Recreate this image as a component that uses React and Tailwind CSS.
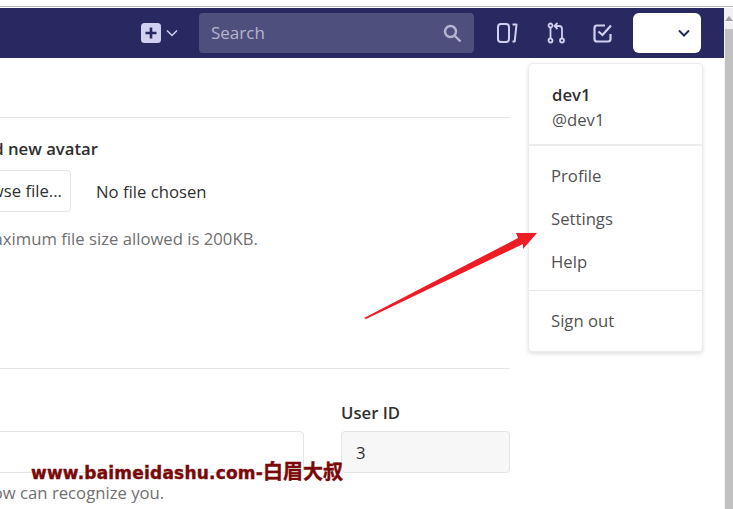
const font = { fontFamily: '"Open Sans", "Noto Sans", sans-serif' };

function PlusIcon() {
  return (
    <svg width="20" height="20" viewBox="0 0 20 20">
      <rect width="20" height="20" rx="3.5" fill="#d1d0f0" />
      <path d="M10 4.5v11M4.5 10h11" stroke="#292961" strokeWidth="2.6" />
    </svg>
  );
}

function Chevron({ color, width = 2 }) {
  return (
    <svg width="12" height="8" viewBox="0 0 12 8" fill="none">
      <path d="M1 1.5l5 5 5-5" stroke={color} strokeWidth={width} />
    </svg>
  );
}

function PanelIcon() {
  return (
    <svg width="21" height="20" viewBox="0 0 21 20" fill="none" stroke="#d1d0f0" strokeWidth="2">
      <rect x="1" y="1" width="11" height="18" rx="3" />
      <path d="M15.500 1.500h4l-1.800 17h-2.200" strokeLinejoin="round" />
    </svg>
  );
}

function MergeIcon() {
  return (
    <svg width="18" height="22" viewBox="0 0 18 22" fill="none" stroke="#d1d0f0" strokeWidth="1.800">
      <circle cx="3.500" cy="3.500" r="2" />
      <circle cx="3.500" cy="18.500" r="2" />
      <circle cx="15" cy="18.500" r="2" />
      <path d="M3.500 5.500v11M15 16.500V7q0-3-3-3H8" />
      <path d="M10.500 1L7.500 4l3 3" />
    </svg>
  );
}

function TodoIcon() {
  return (
    <svg width="20" height="20" viewBox="0 0 20 20" fill="none" stroke="#d1d0f0" strokeWidth="2.200">
      <path d="M17.500 11v5q0 2.500-2.500 2.500H4q-2.500 0-2.500-2.500V5q0-2.500 2.500-2.500h8" />
      <path d="M5.500 8.500l4 3.500 8.500-9.500" />
    </svg>
  );
}

function Navbar() {
  return (
    <div className="flex h-[50px] w-[724px] items-center justify-end bg-[#292961] pr-[23px]">
      <PlusIcon />
      <div className="ml-[5px] mr-[21px]">
        <Chevron color="#d1d0f0" width={1.5} />
      </div>
      <div className="flex h-10 w-[275px] items-center justify-between rounded bg-[#4f4f7d] pl-3 pr-[12px] text-[17px] text-[#b5b5d0]">
        <span>Search</span>
        <svg width="19" height="19" viewBox="0 0 19 19" fill="none" stroke="#b5b5d0" strokeWidth="2.400">
          <circle cx="7.500" cy="7.500" r="5.500" />
          <path d="M11.500 11.500l6 6" />
        </svg>
      </div>
      <div className="ml-[23px]"><PanelIcon /></div>
      <div className="ml-[29px]"><MergeIcon /></div>
      <div className="ml-[28px]"><TodoIcon /></div>
      <div className="ml-[20px] flex h-10 w-[68px] items-center justify-end rounded-md bg-white pr-[11px]">
        <Chevron color="#292961" />
      </div>
    </div>
  );
}

function Content() {
  return (
    <div className="w-[510px] overflow-hidden text-[16.7px] text-[#303030]">
      <div className="mt-[59px] border-t border-[#e5e5e5]" />
      <div className="mt-[19px] -ml-[54px] whitespace-nowrap font-semibold leading-[24px]">Upload new avatar</div>
      <div className="mt-[9px] flex items-center whitespace-nowrap">
        <div className="-ml-[40px] flex h-[42px] w-[111px] items-center justify-end rounded border border-[#e5e5e5] pr-[8px]">Browse file...</div>
        <span className="ml-[25px] pt-[1px]">No file chosen</span>
      </div>
      <div className="mt-[14px] -ml-[55px] whitespace-nowrap text-[#707070]">The maximum file size allowed is 200KB.</div>
      <div className="mt-[117px] border-t border-[#e5e5e5]" />
      <div className="mt-[32px] flex gap-[37px]">
        <div className="-ml-[10px] w-[314px] pt-[30px]">
          <div className="h-[42px] rounded border border-[#e5e5e5]" />
        </div>
        <div className="flex-1">
          <div className="font-semibold leading-[24px]">User ID</div>
          <div className="mt-[6px] flex h-[42px] items-center rounded border border-[#e5e5e5] bg-[#f7f7f7] pl-[14px]">3</div>
        </div>
      </div>
      <div className="mt-[7px] -ml-[278px] whitespace-nowrap text-[#707070]">Enter your name, so people you know can recognize you.</div>
    </div>
  );
}

function UserMenu() {
  return (
    <div className="absolute left-[528px] top-[63px] h-[289px] w-[175px] rounded border border-[#ececec] bg-white text-[16.7px] text-[#525252] shadow-[0_2px_4px_rgba(0,0,0,0.12)]">
      <div className="h-[82px] border-b-2 border-[#ececec] pl-[23px] pt-[18px] leading-[25px]">
        <div className="font-semibold text-[#303030]">dev1</div>
        <div>@dev1</div>
      </div>
      <div className="pl-[22px] pt-[8px] leading-[43px]">
        <div>Profile</div>
        <div>Settings</div>
        <div>Help</div>
      </div>
      <div className="mt-[7px] border-t border-[#e8e8e8] pl-[22px] pt-[8px] leading-[43px]">Sign out</div>
    </div>
  );
}

function Scrollbar() {
  return (
    <div className="flex w-[9px] flex-col bg-[#f1f1f1] pl-[1px]">
      <div className="flex h-[21px] items-center justify-center">
        <div className="h-0 w-0 border-x-[4px] border-b-[5px] border-x-transparent border-b-[#a3a3a3]" />
      </div>
      <div className="flex-1 bg-[#c1c1c1]" />
    </div>
  );
}

export default function App() {
  return (
    <div className="relative h-[509px] w-[733px] overflow-hidden bg-white" style={font}>
      <div className="mb-[1px] h-[7px] border-b border-[#b9b9b9]" />
      <div className="flex h-[501px]">
        <div className="w-[724px]">
          <Navbar />
          <Content />
        </div>
        <Scrollbar />
      </div>
      <UserMenu />
      {/* arrow annotation */}
      <svg className="absolute left-[360px] top-[228px]" width="182" height="94" viewBox="0 0 182 94">
        <path d="M4 90L158 10L156 5L177 5L163 21L163 16L6 91z" fill="#ee1c25" />
      </svg>
      <div className="absolute left-[31px] top-[459px] whitespace-nowrap text-[17px] font-bold leading-[26px] tracking-[0.2px] text-[#7a0808] [-webkit-text-stroke:0.4px_#7a0808]" style={{ fontFamily: '"DejaVu Sans", "Noto Sans CJK SC", sans-serif' }}>
        www.baimeidashu.com-<span className="text-[20px] tracking-normal">白眉大叔</span>
      </div>
    </div>
  );
}
